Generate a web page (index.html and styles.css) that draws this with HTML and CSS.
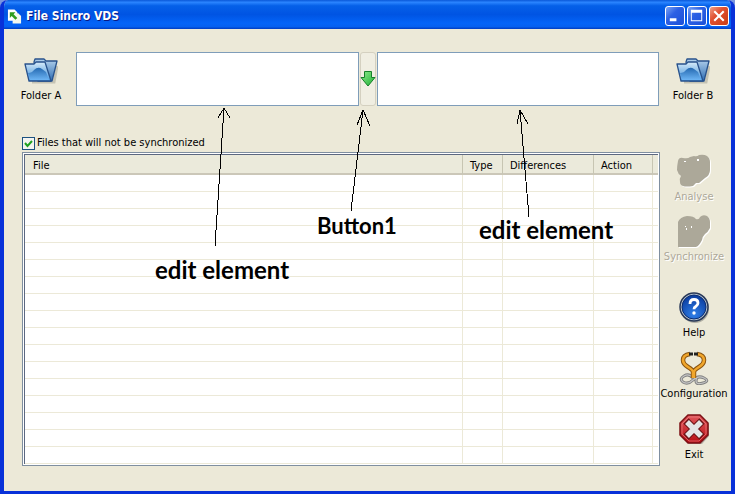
FILE: index.html
```
<!DOCTYPE html>
<html lang="en">
<head>
    <meta charset="UTF-8">
    <meta name="viewport" content="width=device-width, initial-scale=1.0">
    <title>File Sincro VDS</title>
    <link rel="stylesheet" href="styles.css">
</head>
<body>
    <!-- Shared gradients and symbols -->
    <svg class="defs" width="0" height="0" aria-hidden="true">
        <defs>
            <linearGradient id="folder-back" x1="0" y1="0" x2="0" y2="1">
                <stop offset="0" stop-color="#b4d2ec"/>
                <stop offset="1" stop-color="#2c6cb4"/>
            </linearGradient>
            <linearGradient id="folder-front" x1="0" y1="0" x2="0" y2="1">
                <stop offset="0" stop-color="#d8ecfa"/>
                <stop offset="0.45" stop-color="#8fc0ea"/>
                <stop offset="1" stop-color="#4f9fe8"/>
            </linearGradient>
            <linearGradient id="folder-wave" x1="0" y1="0" x2="0" y2="1">
                <stop offset="0" stop-color="#2468b0"/>
                <stop offset="1" stop-color="#6cb4f4"/>
            </linearGradient>
            <radialGradient id="help-blue" cx="0.5" cy="0.8" r="0.8">
                <stop offset="0" stop-color="#2f7fe8"/>
                <stop offset="1" stop-color="#0a3a9c"/>
            </radialGradient>
            <linearGradient id="exit-red" x1="0" y1="0" x2="0" y2="1">
                <stop offset="0" stop-color="#e0565a"/>
                <stop offset="1" stop-color="#b80c14"/>
            </linearGradient>
            <linearGradient id="arrow-green" x1="0" y1="0" x2="1" y2="1">
                <stop offset="0" stop-color="#8cec8c"/>
                <stop offset="1" stop-color="#1fae34"/>
            </linearGradient>
        </defs>
        <symbol id="folder" viewBox="0 0 34 28">
            <path d="M8 26h22l3-16" fill="none" stroke="#8c8a7c" stroke-opacity="0.4" stroke-width="3"/>
            <path d="M10 6l1-3h9l2 2h11l-5 20H14z" fill="url(#folder-back)" stroke="#28528c" stroke-width="1.3" stroke-linejoin="round"/>
            <path d="M1 8h9l2-2h9l6 19H5z" fill="url(#folder-front)" stroke="#28528c" stroke-width="1.3" stroke-linejoin="round"/>
            <path d="M4 17q4 0 6-3q4-4 8-1l4 3l3 8H6z" fill="url(#folder-wave)"/>
        </symbol>
    </svg>

    <div class="window">
        <header class="titlebar">
            <svg class="app-icon" viewBox="0 0 16 16" aria-hidden="true">
                <path d="M1 1h7l3 3v9H1z" fill="#fff"/>
                <path d="M6 5h6l3 3v8H6z" fill="#f4f8ee"/>
                <path d="M3 4h6l-2 2l4 4l-2 2l-4-4l-2 2z" fill="#2f9c1c"/>
            </svg>
            <h1>File Sincro VDS</h1>
            <div class="caption-buttons">
                <button type="button" class="caption" aria-label="Minimize">
                    <svg viewBox="0 0 19 19"><path d="M4 12h7v3H4z" fill="#fff"/></svg>
                </button>
                <button type="button" class="caption" aria-label="Maximize">
                    <svg viewBox="0 0 19 19"><path d="M3 3h12v12H3zM4 6v8h10V6z" fill="#fff" fill-rule="evenodd"/></svg>
                </button>
                <button type="button" class="caption close" aria-label="Close">
                    <svg viewBox="0 0 19 19"><path d="M4.500 4.500l10 10M14.500 4.500l-10 10" stroke="#fff" stroke-width="2.2"/></svg>
                </button>
            </div>
        </header>

        <main class="content">
            <div class="folders">
                <button type="button" class="tool">
                    <svg class="folder-icon" aria-hidden="true"><use href="#folder"/></svg>
                    Folder A
                </button>
                <div class="paths">
                    <input type="text" class="path" aria-label="Folder A path">
                    <button type="button" class="direction" aria-label="Direction">
                        <svg viewBox="0 0 16 18" aria-hidden="true">
                            <path d="M4.500 1.500h7v6h3.500L8 16L1 7.500h3.500z" fill="url(#arrow-green)" stroke="#16802a" stroke-linejoin="round"/>
                        </svg>
                    </button>
                    <input type="text" class="path" aria-label="Folder B path">
                </div>
                <button type="button" class="tool">
                    <svg class="folder-icon" aria-hidden="true"><use href="#folder"/></svg>
                    Folder B
                </button>
            </div>

            <div class="workspace">
                <section class="files">
                    <label class="filter">
                        <input type="checkbox" checked>
                        Files that will not be synchronized
                    </label>
                    <div class="list">
                        <table>
                            <colgroup>
                                <col>
                                <col class="col-type">
                                <col class="col-diff">
                                <col class="col-action">
                                <col class="col-rest">
                            </colgroup>
                            <thead>
                                <tr><th>File</th><th>Type</th><th>Differences</th><th>Action</th><th></th></tr>
                            </thead>
                            <tbody>
                                <tr><td></td><td></td><td></td><td></td><td></td></tr>
                                <tr><td></td><td></td><td></td><td></td><td></td></tr>
                                <tr><td></td><td></td><td></td><td></td><td></td></tr>
                                <tr><td></td><td></td><td></td><td></td><td></td></tr>
                                <tr><td></td><td></td><td></td><td></td><td></td></tr>
                                <tr><td></td><td></td><td></td><td></td><td></td></tr>
                                <tr><td></td><td></td><td></td><td></td><td></td></tr>
                                <tr><td></td><td></td><td></td><td></td><td></td></tr>
                                <tr><td></td><td></td><td></td><td></td><td></td></tr>
                                <tr><td></td><td></td><td></td><td></td><td></td></tr>
                                <tr><td></td><td></td><td></td><td></td><td></td></tr>
                                <tr><td></td><td></td><td></td><td></td><td></td></tr>
                                <tr><td></td><td></td><td></td><td></td><td></td></tr>
                                <tr><td></td><td></td><td></td><td></td><td></td></tr>
                                <tr><td></td><td></td><td></td><td></td><td></td></tr>
                                <tr><td></td><td></td><td></td><td></td><td></td></tr>
                                <tr><td></td><td></td><td></td><td></td><td></td></tr>
                            </tbody>
                        </table>
                    </div>
                </section>

                <aside class="sidebar">
                    <div class="group">
                        <button type="button" class="tool" disabled>
                            <svg class="tool-icon" viewBox="0 0 34 34" aria-hidden="true">
                                <path d="M1 7q1-4 5-3q5 1 7-1l4-1q3 1 5-1q5-1 8 1q3 2 3 6v8q0 5-5 8l-6 5l-3 0l-3 3q-7 1-10 0q-3-1-3-4q-1-3 1-6q-3-2-4-6q0-4 1-9z" fill="#fff" transform="translate(1 1)"/>
                                <path d="M1 7q1-4 5-3q5 1 7-1l4-1q3 1 5-1q5-1 8 1q3 2 3 6v8q0 5-5 8l-6 5l-3 0l-3 3q-7 1-10 0q-3-1-3-4q-1-3 1-6q-3-2-4-6q0-4 1-9z" fill="#aca899"/>
                                <path d="M7 7h2v1H7zM20 5h2v2h-2z" fill="#fff"/>
                            </svg>
                            Analyse
                        </button>
                        <button type="button" class="tool" disabled>
                            <svg class="tool-icon" viewBox="0 0 34 34" aria-hidden="true">
                                <path d="M1 8q2-5 9-6q7 0 9 3q3 1 4-2q3-3 7-1q3 2 3 6v6q-2 4-5 6q-3 3-3 6q-3 6-6 7H1z" fill="#fff" transform="translate(1 1)"/>
                                <path d="M1 8q2-5 9-6q7 0 9 3q3 1 4-2q3-3 7-1q3 2 3 6v6q-2 4-5 6q-3 3-3 6q-3 6-6 7H1z" fill="#aca899"/>
                                <path d="M9 14h1v2H9zM14 12h1v2h-1zM8 12h1v1H8z" fill="#fff"/>
                            </svg>
                            Synchronize
                        </button>
                    </div>
                    <div class="group">
                        <button type="button" class="tool">
                            <svg class="tool-icon" viewBox="0 0 34 34" aria-hidden="true">
                                <circle cx="18" cy="19" r="14" fill="#555" fill-opacity="0.4"/>
                                <circle cx="17" cy="17" r="14" fill="#b8c4d0" stroke="#283858" stroke-width="1.5"/>
                                <circle cx="17" cy="17" r="12" fill="url(#help-blue)" stroke="#0a2c70"/>
                                <path d="M13 14q0-4.500 4-4.500t4 3.500q0 2-2 3.200t-2 3" fill="none" stroke="#fff" stroke-width="2.8"/>
                                <circle cx="17" cy="23" r="1.700" fill="#fff"/>
                            </svg>
                            Help
                        </button>
                        <button type="button" class="tool">
                            <svg class="tool-icon" viewBox="0 0 34 34" aria-hidden="true">
                                <path d="M16 27q-4-5-9-2t-1 6q5 3 10-2t11-2t-1 5t-7-2t3-4" fill="none" stroke="#808080" stroke-width="3"/>
                                <path d="M16 27q-4-5-9-2t-1 6q5 3 10-2t11-2t-1 5t-7-2t3-4" fill="none" stroke="#c4c4c4" stroke-width="1.200"/>
                                <path d="M13 3Q6 4 6 9q0 4 5 7t5 5v6M20 3q7 1 7 6q0 4-5 7t-5 5v6" fill="none" stroke="#8a5410" stroke-width="4.500"/>
                                <path d="M13 3Q6 4 6 9q0 4 5 7t5 5v6M20 3q7 1 7 6q0 4-5 7t-5 5v6" fill="none" stroke="#f0a62c" stroke-width="2.600"/>
                                <path d="M12 3h4M17 3h4" stroke="#222" stroke-width="3"/>
                            </svg>
                            Configuration
                        </button>
                        <button type="button" class="tool">
                            <svg class="tool-icon" viewBox="0 0 34 34" aria-hidden="true">
                                <path d="M12 4h12l8 8v12l-7 8H12l-7-8z" fill="#555" fill-opacity="0.4"/>
                                <path d="M11 3h12l8 8v12l-8 8H11l-8-8V11z" fill="url(#exit-red)" stroke="#7c1014" stroke-width="1.500"/>
                                <path d="M12 5h10l7 7v10l-7 7H12l-7-7V12z" fill="none" stroke="#f08c8c" stroke-opacity="0.6"/>
                                <path d="M9 9l16 16M25 9L9 25" stroke="#6c1418" stroke-width="7.500"/>
                                <path d="M10 10l14 14M24 10L10 24" stroke="#e4e4e4" stroke-width="5.500"/>
                            </svg>
                            Exit
                        </button>
                    </div>
                </aside>
            </div>
        </main>

        <!-- Callouts drawn over the window -->
        <svg class="callout-lines" width="735" height="494" aria-hidden="true">
            <path d="M215 246L224 108M218 118L224 108L230 118"/>
            <path d="M351 211L363 110M357 125L363 110L370 126"/>
            <path d="M529 217L520 110M517 124L520 110L528 124"/>
        </svg>
        <span class="callout callout-left">edit element</span>
        <span class="callout callout-button">Button1</span>
        <span class="callout callout-right">edit element</span>
    </div>
</body>
</html>
```

FILE: styles.css
```
* {
    margin: 0;
    padding: 0;
    box-sizing: border-box;
}

body {
    background: #7a96df;
    font-family: "DejaVu Sans Condensed", "Noto Sans", sans-serif;
    font-size: 11px;
    line-height: 14px;
    color: #000;
}

button {
    border: 0;
    background: none;
    font: inherit;
    color: inherit;
}

svg {
    display: block;
}

.defs {
    position: absolute;
}

/* Window frame */
.window {
    position: relative;
    display: flex;
    flex-direction: column;
    min-height: 100vh;
    border: solid #0831d9;
    border-width: 0 4px 4px;
    border-radius: 8px 8px 0 0;
    background: #ece9d8;
    overflow: hidden;
}

.titlebar {
    display: flex;
    align-items: center;
    height: 29px;
    margin: 0 -4px;
    padding: 3px 6px 0 7px;
    background: linear-gradient(#0a58d8 0%, #2a84ff 8%, #0560e8 20%, #0054e3 50%, #0464f8 80%, #0560f0 92%, #003cc0 100%);
}

.app-icon {
    width: 15px;
    height: 16px;
    margin-right: 4px;
}

.titlebar h1 {
    flex: 1;
    font-size: 12px;
    line-height: 16px;
    color: #fff;
    text-shadow: 1px 1px #0a1883;
}

.caption-buttons {
    display: flex;
    gap: 2px;
}

.caption {
    width: 20px;
    height: 20px;
    border: 1px solid #fff;
    border-radius: 3px;
    background: linear-gradient(135deg, #7ca4f4, #2c60e4 40%, #1c50d8);
}

.caption.close {
    background: linear-gradient(135deg, #f0a088, #e05030 40%, #c83c14);
}

/* Folder row */
.content {
    flex: 1;
    display: flex;
    flex-direction: column;
    gap: 30px;
    padding: 23px 4px 25px 18px;
}

.folders {
    display: flex;
}

.tool {
    display: flex;
    flex-direction: column;
    align-items: center;
    gap: 2px;
    white-space: nowrap;
}

.tool:disabled {
    color: #aca899;
    text-shadow: 1px 1px #fff;
}

.folders .tool {
    width: 38px;
    padding-top: 4px;
    gap: 5px;
}

.folders .tool:last-child {
    width: 68px;
}

.folder-icon {
    width: 34px;
    height: 28px;
}

.paths {
    flex: 1;
    display: flex;
    gap: 1px;
    margin-left: 16px;
}

.path {
    flex: 1;
    min-width: 0;
    height: 54px;
    padding: 4px;
    border: 1px solid #7f9db9;
    background: #fff;
    font: inherit;
}

.direction {
    display: flex;
    align-items: center;
    width: 16px;
    border: 1px solid #d4d0c0;
    border-radius: 3px;
    background: #f0eee2;
}

.direction svg {
    flex: none;
    width: 16px;
    height: 18px;
    margin: 0 -1px;
}

/* File list */
.workspace {
    flex: 1;
    display: flex;
}

.files {
    flex: 1;
    display: flex;
    flex-direction: column;
    gap: 2px;
}

.filter {
    display: flex;
    align-items: center;
    gap: 2px;
}

.filter input {
    appearance: none;
    width: 13px;
    height: 13px;
    border: 1px solid #1c5180;
    background: #f4f4f0;
}

.filter input:checked {
    background: #f4f4f0 url("data:image/svg+xml,%3Csvg xmlns='http://www.w3.org/2000/svg' viewBox='0 0 11 11'%3E%3Cpath d='M2 5l2.500 3L9 3' fill='none' stroke='%2321a121' stroke-width='2'/%3E%3C/svg%3E");
}

.list {
    flex: 1;
    padding: 1px;
    border: 1px solid #7f8fa0;
    background: #fff;
}

table {
    width: 100%;
    table-layout: fixed;
    border-collapse: separate;
    border-spacing: 0;
    border: solid #5c6880;
    border-width: 1px 0 0 1px;
}

.col-type {
    width: 40px;
}

.col-diff {
    width: 91px;
}

.col-action {
    width: 59px;
}

.col-rest {
    width: 5px;
}

th {
    height: 20px;
    padding: 4px 0 0 8px;
    border-right: 1px solid #c7c5b2;
    border-bottom: 2px solid #cbc7b8;
    background: #ebeadb;
    font-weight: normal;
    text-align: left;
}

th + th {
    padding-left: 7px;
}

td {
    height: 17px;
    border-right: 1px solid #ece9d8;
    border-bottom: 1px solid #ece9d8;
}

th:last-child,
td:last-child {
    padding: 0;
    border-right: 0;
}

/* Right-hand tools */
.sidebar {
    display: flex;
    flex-direction: column;
    gap: 26px;
    width: 68px;
    margin-right: -1px;
    padding-top: 18px;
}

.group {
    display: flex;
    flex-direction: column;
    align-items: center;
    gap: 10px;
}

.group + .group {
    gap: 11px;
}

.tool-icon {
    width: 34px;
    height: 34px;
}

/* Callouts */
.callout-lines {
    position: absolute;
    top: 0;
    left: -4px;
    fill: none;
    stroke: #000;
    shape-rendering: crispEdges;
    pointer-events: none;
}

.callout {
    position: absolute;
    font-family: Lato, sans-serif;
    font-size: 24px;
    font-weight: 700;
    line-height: 28px;
    white-space: nowrap;
}

.callout-left {
    top: 256px;
    left: 151px;
}

.callout-button {
    top: 212px;
    left: 313px;
    font-size: 22px;
}

.callout-right {
    top: 216px;
    left: 475px;
}
```
